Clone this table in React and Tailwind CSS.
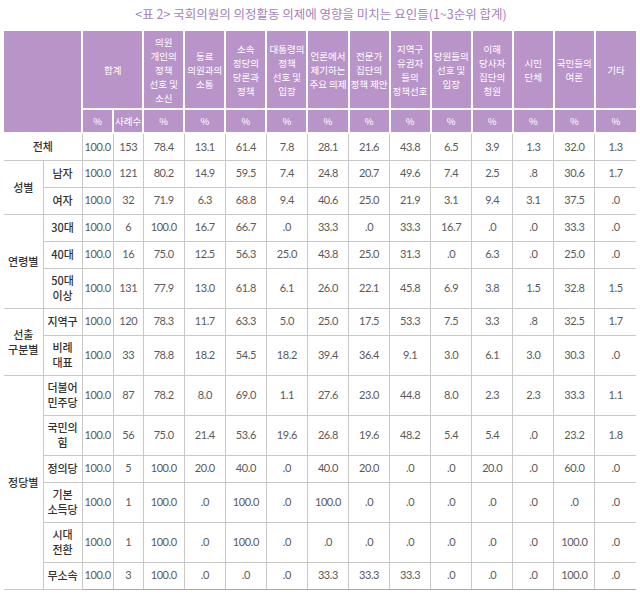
const headers = [
  ["의원", "개인의", "정책", "선호 및", "소신"],
  ["동료", "의원과의", "소통"],
  ["소속", "정당의", "당론과", "정책"],
  ["대통령의", "정책", "선호 및", "입장"],
  ["언론에서", "제기하는", "주요 의제"],
  ["전문가", "집단의", "정책 제안"],
  ["지역구", "유권자", "들의", "정책선호"],
  ["당원들의", "선호 및", "입장"],
  ["이해", "당사자", "집단의", "청원"],
  ["시민", "단체"],
  ["국민들의", "여론"],
  ["기타"],
];

const groups = [
  { name: null, rows: [{ label: ["전체"], v: "100.0 153 78.4 13.1 61.4 7.8 28.1 21.6 43.8 6.5 3.9 1.3 32.0 1.3" }] },
  {
    name: ["성별"],
    rows: [
      { label: ["남자"], v: "100.0 121 80.2 14.9 59.5 7.4 24.8 20.7 49.6 7.4 2.5 .8 30.6 1.7" },
      { label: ["여자"], v: "100.0 32 71.9 6.3 68.8 9.4 40.6 25.0 21.9 3.1 9.4 3.1 37.5 .0" },
    ],
  },
  {
    name: ["연령별"],
    rows: [
      { label: ["30대"], v: "100.0 6 100.0 16.7 66.7 .0 33.3 .0 33.3 16.7 .0 .0 33.3 .0" },
      { label: ["40대"], v: "100.0 16 75.0 12.5 56.3 25.0 43.8 25.0 31.3 .0 6.3 .0 25.0 .0" },
      { label: ["50대", "이상"], v: "100.0 131 77.9 13.0 61.8 6.1 26.0 22.1 45.8 6.9 3.8 1.5 32.8 1.5" },
    ],
  },
  {
    name: ["선출", "구분별"],
    rows: [
      { label: ["지역구"], v: "100.0 120 78.3 11.7 63.3 5.0 25.0 17.5 53.3 7.5 3.3 .8 32.5 1.7" },
      { label: ["비례", "대표"], v: "100.0 33 78.8 18.2 54.5 18.2 39.4 36.4 9.1 3.0 6.1 3.0 30.3 .0" },
    ],
  },
  {
    name: ["정당별"],
    rows: [
      { label: ["더불어", "민주당"], v: "100.0 87 78.2 8.0 69.0 1.1 27.6 23.0 44.8 8.0 2.3 2.3 33.3 1.1" },
      { label: ["국민의", "힘"], v: "100.0 56 75.0 21.4 53.6 19.6 26.8 19.6 48.2 5.4 5.4 .0 23.2 1.8" },
      { label: ["정의당"], v: "100.0 5 100.0 20.0 40.0 .0 40.0 20.0 .0 .0 20.0 .0 60.0 .0" },
      { label: ["기본", "소득당"], v: "100.0 1 100.0 .0 100.0 .0 100.0 .0 .0 .0 .0 .0 .0 .0" },
      { label: ["시대", "전환"], v: "100.0 1 100.0 .0 100.0 .0 .0 .0 .0 .0 .0 .0 100.0 .0" },
      { label: ["무소속"], v: "100.0 3 100.0 .0 .0 .0 33.3 33.3 33.3 .0 .0 .0 100.0 .0" },
    ],
  },
];

const kr = { fontFamily: '"Noto Sans CJK KR", "Noto Sans", sans-serif' };
const num = { fontFamily: 'Lato, "Noto Sans CJK KR", sans-serif' };

const Lines = ({ lines }) =>
  lines.map((l, i) => (
    <span key={i} className="block">
      {l}
    </span>
  ));

export default function App() {
  return (
    <div className="w-[640px] h-[597px] bg-white overflow-hidden">
      {/* title */}
      <div
        className="h-[29px] flex items-center justify-center pl-[2px] text-[12.5px] text-[#a47fbd]"
        style={kr}
      >
        &lt;표 2&gt; 국회의원의 의정활동 의제에 영향을 미치는 요인들(1~3순위 합계)
      </div>

      <table className="ml-[4px] w-[632px] table-fixed border-collapse text-center">
        <colgroup>
          <col className="w-[39px]" />
          <col className="w-[39px]" />
          <col className="w-[31px]" />
          <col className="w-[30px]" />
          {headers.map((_, i) => (
            <col key={i} className="w-[41px]" />
          ))}
        </colgroup>
        <thead className="text-white text-[9.5px] leading-[14px]" style={kr}>
          <tr className="h-[79px]">
            <th rowSpan={2} colSpan={2} className="bg-[#b994c9] border-2 border-white border-l-0"></th>
            <th colSpan={2} className="bg-[#b994c9] border-2 border-white font-normal">
              합계
            </th>
            {headers.map((h, i) => (
              <th
                key={i}
                className={`bg-[#b994c9] border-2 border-white font-normal px-0 ${
                  i === headers.length - 1 ? "border-r-0" : ""
                }`}
              >
                <Lines lines={h} />
              </th>
            ))}
          </tr>
          <tr className="h-[24px]">
            <th className="bg-[#b994c9] border-2 border-white font-normal">%</th>
            <th className="bg-[#b994c9] border-2 border-white font-normal">사례수</th>
            {headers.map((_, i) => (
              <th
                key={i}
                className={`bg-[#b994c9] border-2 border-white font-normal ${
                  i === headers.length - 1 ? "border-r-0" : ""
                }`}
              >
                %
              </th>
            ))}
          </tr>
        </thead>
        <tbody className="text-[11px] text-[#5a5a5a]">
          {groups.map((g, gi) =>
            g.rows.map((r, ri) => {
              const vals = r.v.split(" ");
              const tall = r.label.length > 1;
              const isLast = gi === groups.length - 1 && ri === g.rows.length - 1;
              return (
                <tr key={`${gi}-${ri}`} className={tall ? "h-[40px]" : "h-[27px]"}>
                  {g.name === null ? (
                    <td
                      colSpan={2}
                      className="border border-[#c8c8c8] border-l-0 text-[11px] font-medium text-[#333] leading-[15px]"
                      style={kr}
                    >
                      <Lines lines={r.label} />
                    </td>
                  ) : (
                    <>
                      {ri === 0 && (
                        <td
                          rowSpan={g.rows.length}
                          className="border border-[#c8c8c8] border-l-0 text-[11px] font-medium text-[#333] leading-[15px]"
                          style={kr}
                        >
                          <Lines lines={g.name} />
                        </td>
                      )}
                      <td
                        className="border border-[#c8c8c8] text-[11px] font-medium text-[#333] leading-[15px]"
                        style={kr}
                      >
                        <Lines lines={r.label} />
                      </td>
                    </>
                  )}
                  {vals.map((v, i) => (
                    <td
                      key={i}
                      className={`border border-[#c8c8c8] px-0 tracking-[-0.4px] ${
                        i === vals.length - 1 ? "border-r-0" : ""
                      } ${isLast ? "border-b-[#a8a8a8]" : ""}`}
                      style={num}
                    >
                      {v}
                    </td>
                  ))}
                </tr>
              );
            })
          )}
        </tbody>
      </table>
    </div>
  );
}
